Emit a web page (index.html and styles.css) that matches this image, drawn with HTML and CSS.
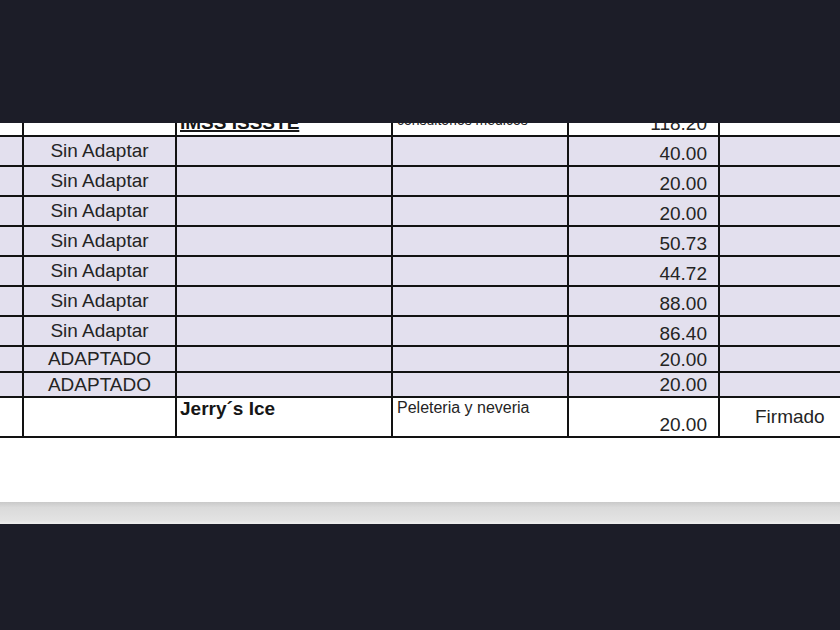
FILE: index.html
```html
<!DOCTYPE html>
<html lang="es">
<head>
<meta charset="utf-8">
<title>Tabla</title>
<link rel="stylesheet" href="styles.css">
</head>
<body>
<div class="topbar"></div>
<div class="photo">
  <div class="sheet">
    <div class="grid">
      <div class="c w"></div>
      <div class="c w"></div>
      <div class="c w name"><span class="bold u">IMSS ISSSTE</span></div>
      <div class="c w kind"><span class="small">consultorios médicos</span></div>
      <div class="c w num">118.20</div>
      <div class="c w"></div>

      <div class="c"></div><div class="c st">Sin Adaptar</div><div class="c"></div><div class="c"></div><div class="c num">40.00</div><div class="c"></div>
      <div class="c"></div><div class="c st">Sin Adaptar</div><div class="c"></div><div class="c"></div><div class="c num">20.00</div><div class="c"></div>
      <div class="c"></div><div class="c st">Sin Adaptar</div><div class="c"></div><div class="c"></div><div class="c num">20.00</div><div class="c"></div>
      <div class="c"></div><div class="c st">Sin Adaptar</div><div class="c"></div><div class="c"></div><div class="c num">50.73</div><div class="c"></div>
      <div class="c"></div><div class="c st">Sin Adaptar</div><div class="c"></div><div class="c"></div><div class="c num">44.72</div><div class="c"></div>
      <div class="c"></div><div class="c st">Sin Adaptar</div><div class="c"></div><div class="c"></div><div class="c num">88.00</div><div class="c"></div>
      <div class="c"></div><div class="c st">Sin Adaptar</div><div class="c"></div><div class="c"></div><div class="c num">86.40</div><div class="c"></div>
      <div class="c"></div><div class="c st">ADAPTADO</div><div class="c"></div><div class="c"></div><div class="c num">20.00</div><div class="c"></div>
      <div class="c"></div><div class="c st">ADAPTADO</div><div class="c"></div><div class="c"></div><div class="c num">20.00</div><div class="c"></div>

      <div class="c w"></div>
      <div class="c w"></div>
      <div class="c w top"><span class="bold">Jerry´s Ice</span></div>
      <div class="c w top2"><span class="small2">Peleteria y neveria</span></div>
      <div class="c w num">20.00</div>
      <div class="c w sign">Firmado</div>
    </div>
  </div>
  <div class="band"></div>
</div>
</body>
</html>
```
FILE: styles.css
```css
html, body {
  margin: 0;
  padding: 0;
  overflow: hidden;
  background: #1c1d28;
  width: 840px;
  height: 630px;
}

.topbar {
  height: 123px;
}

.photo {
  height: 401px;
  display: flex;
  flex-direction: column;
  background: #ffffff;
}

.sheet {
  flex: 1;
  overflow: hidden;
  background: #ffffff;
}

.grid {
  display: grid;
  grid-template-columns: 58px 151px 214px 174px 149px 160px;
  grid-template-rows: 28px repeat(7, 28px) 24px 23px 38px;
  gap: 2px;
  padding-bottom: 2px;
  background: #121212;
  width: 916px;
  margin-left: -36px;
  margin-top: -16px;
  font-family: "Liberation Sans", Arial, sans-serif;
  font-size: 19px;
  color: #242424;
}

.c {
  background: #e3e0ee;
  display: flex;
  align-items: center;
  overflow: hidden;
  white-space: nowrap;
}

.c.w {
  background: #ffffff;
}

.st {
  justify-content: center;
}

.num {
  justify-content: flex-end;
  align-items: flex-end;
  padding-right: 11px;
  padding-bottom: 0;
}

.name {
  align-items: flex-end;
  padding-left: 3px;
  padding-bottom: 1px;
}

.kind {
  align-items: flex-end;
  padding-left: 4px;
  padding-bottom: 7px;
}

.bold {
  font-weight: bold;
  color: #161616;
}

.u {
  text-decoration: underline;
  text-decoration-thickness: 2px;
}

.small {
  font-size: 14px;
}

.top {
  align-items: flex-start;
  padding-left: 3px;
  padding-top: 2px;
  line-height: 18px;
}

.top2 {
  align-items: flex-start;
  padding-left: 4px;
  padding-top: 2px;
  line-height: 16px;
}

.small2 {
  font-size: 16px;
}

.sign {
  padding-left: 35px;
}

.band {
  height: 22px;
  background: linear-gradient(#c9c9c9, #dadada 25%, #e3e3e3 85%, #eeeeee);
}
```
